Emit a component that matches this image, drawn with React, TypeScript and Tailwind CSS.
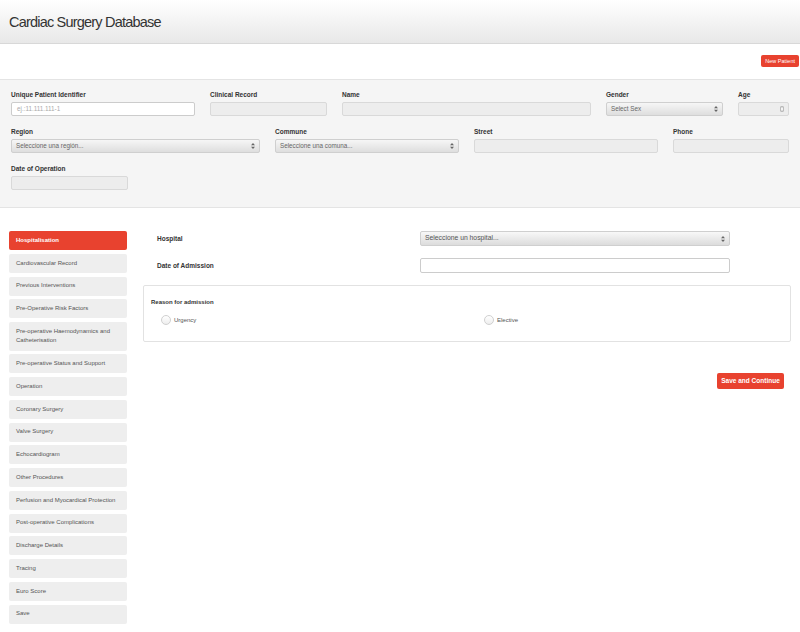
import React from 'react';

const FONT = { fontFamily: '"Liberation Sans", Arial, sans-serif' };

const menu = [
  'Hospitalisation',
  'Cardiovascular Record',
  'Previous Interventions',
  'Pre-Operative Risk Factors',
  'Pre-operative Haemodynamics and Catheterisation',
  'Pre-operative Status and Support',
  'Operation',
  'Coronary Surgery',
  'Valve Surgery',
  'Echocardiogram',
  'Other Procedures',
  'Perfusion and Myocardical Protection',
  'Post-operative Complications',
  'Discharge Details',
  'Tracing',
  'Euro Score',
  'Save',
];

function Arrows() {
  return (
    <svg width="4" height="6" viewBox="0 0 4 6" className="shrink-0">
      <path d="M2 0 L4 2.2 L0 2.2 Z M2 6 L4 3.8 L0 3.8 Z" fill="#666" />
    </svg>
  );
}

function Label({ children }: { children: React.ReactNode }) {
  return <div className="h-[9px] mb-[3px] text-[6.5px] leading-[9px] font-bold text-[#333]">{children}</div>;
}

function Field({ w, label, children }: { w: string; label: string; children: React.ReactNode }) {
  return (
    <div className={w}>
      <Label>{label}</Label>
      {children}
    </div>
  );
}

function GrayInput() {
  return <div className="h-[14px] rounded-[2px] border border-[#d9d9d9] bg-[#ededed]" />;
}

function Select({ text }: { text: string }) {
  return (
    <div className="h-[14px] rounded-[2px] border border-[#cfcfcf] bg-gradient-to-b from-[#f6f6f6] to-[#dedede] flex items-center justify-between pl-[4px] pr-[4px]">
      <span className="text-[6.3px] text-[#666]">{text}</span>
      <Arrows />
    </div>
  );
}

export default function App() {
  return (
    <div className="min-h-screen bg-white text-[#333]" style={FONT}>
      {/* Header */}
      <header className="h-[44px] flex items-center pl-[9px] bg-gradient-to-b from-white to-[#e8e8e8] border-b border-[#d8d8d8]">
        <h1 className="text-[14.5px] text-[#333] tracking-[-0.8px] mt-[2px]">Cardiac Surgery Database</h1>
      </header>

      <div className="flex justify-end pr-[1px] mt-[11px]">
        <button className="h-[12px] px-[4px] rounded-[2px] bg-[#e8422f] text-white text-[5.5px] leading-[12px]">New Patient</button>
      </div>

      {/* Patient panel */}
      <section className="mt-[12px] h-[129px] bg-[#f5f5f5] border-y border-[#e4e4e4] px-[11px] pt-[10px]">
        <div className="flex gap-[15px]">
          <Field w="w-[184px]" label="Unique Patient Identifier">
            <div className="h-[14px] rounded-[2px] border border-[#cccccc] bg-white flex items-center pl-[5px]">
              <span className="text-[6.3px] text-[#aaa]">ej.:11.111.111-1</span>
            </div>
          </Field>
          <Field w="w-[117px]" label="Clinical Record">
            <GrayInput />
          </Field>
          <Field w="w-[249px]" label="Name">
            <GrayInput />
          </Field>
          <Field w="w-[117px]" label="Gender">
            <Select text="Select Sex" />
          </Field>
          <Field w="w-[51px]" label="Age">
            <div className="h-[14px] rounded-[2px] border border-[#d9d9d9] bg-[#ededed] flex items-center justify-end pr-[4px]">
              <div className="w-[4px] h-[6px] rounded-[1px] border border-[#bbb] bg-white flex items-center justify-center">
                <svg width="2" height="4" viewBox="0 0 2 4">
                  <path d="M0 1.4 L1 0.4 L2 1.4 M0 2.6 L1 3.6 L2 2.6" stroke="#777" strokeWidth="0.5" fill="none" />
                </svg>
              </div>
            </div>
          </Field>
        </div>

        <div className="flex gap-[15px] mt-[11px]">
          <Field w="w-[249px]" label="Region">
            <Select text="Seleccione una región..." />
          </Field>
          <Field w="w-[184px]" label="Commune">
            <Select text="Seleccione una comuna..." />
          </Field>
          <Field w="w-[184px]" label="Street">
            <GrayInput />
          </Field>
          <Field w="w-[116px]" label="Phone">
            <GrayInput />
          </Field>
        </div>

        <div className="flex mt-[11px]">
          <Field w="w-[117px]" label="Date of Operation">
            <GrayInput />
          </Field>
        </div>
      </section>

      {/* Body */}
      <div className="flex mt-[23px] pl-[9px]">
        <nav className="w-[118px] flex flex-col gap-[3.75px]">
          {menu.map((m, i) => (
            <div
              key={m}
              className={
                i === 0
                  ? 'min-h-[19px] rounded-[2px] bg-[#e8422f] text-white font-bold text-[6px] leading-[9.5px] px-[7px] py-[4.75px]'
                  : 'min-h-[19px] rounded-[2px] bg-[#eeeeee] text-[#555] text-[6px] leading-[9.5px] px-[7px] py-[4.75px]'
              }
            >
              {m}
            </div>
          ))}
        </nav>

        <main className="ml-[16px] w-[648px]">
          <div className="flex items-center h-[15px]">
            <div className="w-[277px] pl-[14px] text-[6.5px] font-bold">Hospital</div>
            <div className="w-[310px] h-[15px] rounded-[2px] border border-[#cfcfcf] bg-gradient-to-b from-[#f8f8f8] to-[#dcdcdc] flex items-center justify-between pl-[4px] pr-[4px]">
              <span className="text-[6.8px] text-[#555]">Seleccione un hospital...</span>
              <Arrows />
            </div>
          </div>

          <div className="flex items-center h-[15px] mt-[12px]">
            <div className="w-[277px] pl-[14px] text-[6.5px] font-bold">Date of Admission</div>
            <div className="w-[310px] h-[15px] rounded-[2px] border border-[#cccccc] bg-white" />
          </div>

          <div className="mt-[12px] h-[57px] rounded-[2px] border border-[#e2e2e2] bg-white pl-[7px] pt-[12px]">
            <div className="text-[6px] font-bold leading-[9px]">Reason for admission</div>
            <div className="flex mt-[8px] pl-[10px]">
              <label className="flex items-center gap-[3px] w-[323px]">
                <span className="w-[10px] h-[10px] rounded-full border border-[#d0d0d0] bg-gradient-to-b from-white to-[#eee]" />
                <span className="text-[6px] text-[#555]">Urgency</span>
              </label>
              <label className="flex items-center gap-[3px]">
                <span className="w-[10px] h-[10px] rounded-full border border-[#d0d0d0] bg-gradient-to-b from-white to-[#eee]" />
                <span className="text-[6px] text-[#555]">Elective</span>
              </label>
            </div>
          </div>

          <div className="flex justify-end pr-[7px] mt-[31px]">
            <button className="h-[16px] w-[67px] rounded-[2px] bg-[#e8422f] text-white text-[6.5px] font-bold">Save and Continue</button>
          </div>
        </main>
      </div>
    </div>
  );
}
